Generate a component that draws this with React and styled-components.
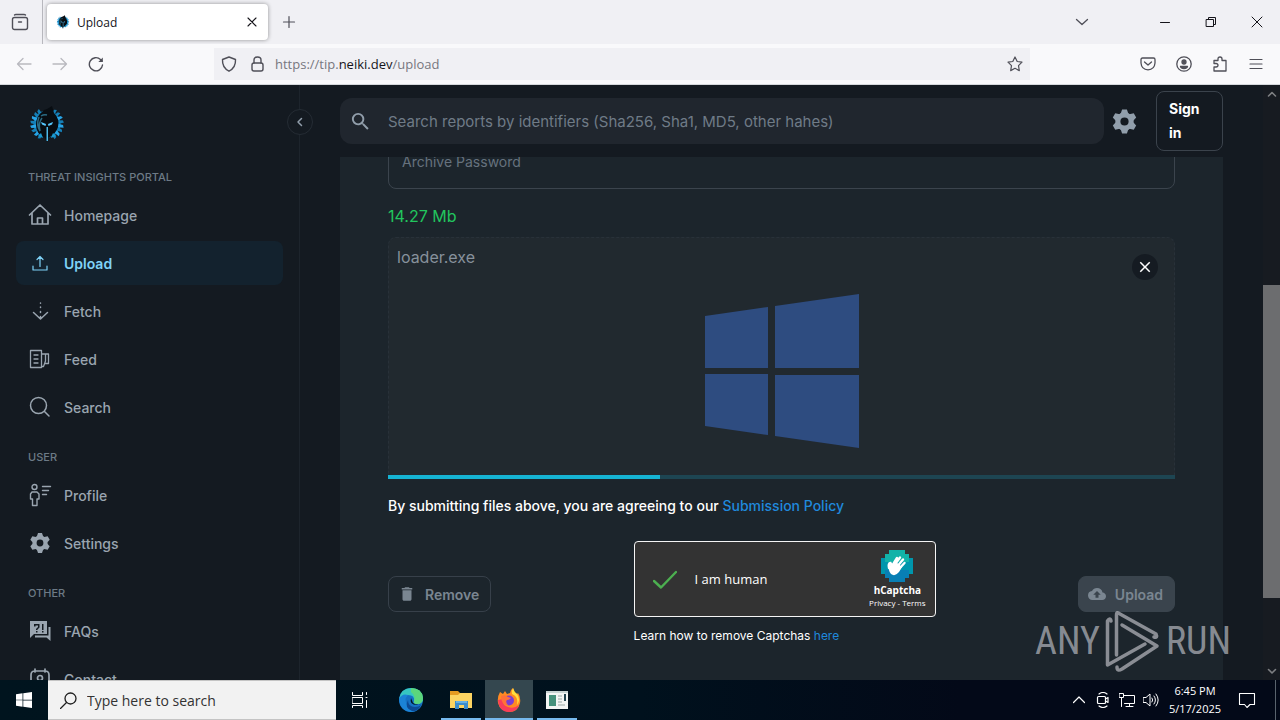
import React from "react";
import styled, { createGlobalStyle } from "styled-components";
import { MdSearch, MdDelete, MdCloudUpload, MdClose } from "react-icons/md";

const GlobalStyle = createGlobalStyle`
  * {
    box-sizing: border-box;
  }

  body {
    margin: 0;
    background: #141a21;
    font-family: Inter, "Liberation Sans", sans-serif;
    font-size: 14px;
  }

  button, input {
    font-family: inherit;
    margin: 0;
  }

  a {
    text-decoration: none;
  }

  svg {
    display: block;
    flex: none;
  }
`;

const systemFont = `"Open Sans", "Noto Sans", sans-serif`;

const Screen = styled.div`
  position: relative;
  height: 100vh;
  display: flex;
  flex-direction: column;
  overflow: hidden;
`;

/* browser */

const TabBar = styled.div`
  flex: none;
  height: 44px;
  display: flex;
  align-items: center;
  background: #f0f0f4;
  color: #3e3e46;
  font-family: ${systemFont};
`;

const ChromeButton = styled.button`
  width: ${props => props.$width || 36}px;
  height: 36px;
  padding: 0;
  border: 0;
  background: none;
  display: flex;
  align-items: center;
  justify-content: center;
  color: ${props => props.$muted ? "#b9b9bf" : "#4f4f58"};
`;

const TabDivider = styled.div`
  width: 1px;
  height: 44px;
  margin: 0 4px 0 2px;
  background: #b8b8be;
`;

const Tab = styled.div`
  width: 221px;
  height: 36px;
  padding: 0 8px 0 9px;
  display: flex;
  align-items: center;
  gap: 7px;
  border-radius: 4px;
  background: #ffffff;
  box-shadow: 0 0 4px rgba(0, 0, 0, 0.4);
  color: #15141a;
  font-size: 12px;
`;

const TabTitle = styled.span`
  flex: 1;
`;

const TabClose = styled.button`
  width: 16px;
  height: 24px;
  padding: 0;
  border: 0;
  background: none;
  display: flex;
  align-items: center;
  justify-content: center;
  color: #15141a;
`;

const Spacer = styled.div`
  flex: 1;
`;

const WindowButtons = styled.div`
  display: flex;
  margin-left: 42px;

  button {
    color: #15141a;
  }
`;

const NavBar = styled.div`
  flex: none;
  height: 41px;
  padding: 0 6px;
  display: flex;
  align-items: center;
  background: #f9f9fb;
  border-bottom: 1px solid #d5d8dc;
  font-family: ${systemFont};
`;

const UrlBox = styled.div`
  flex: 1;
  max-width: 816px;
  height: 32px;
  margin: 0 auto;
  display: flex;
  align-items: center;
  background: #f0f0f4;
  color: #4f4f58;
`;

const UrlText = styled.div`
  flex: 1;
  padding-left: 4px;
  font-size: 13px;
  color: #77777f;

  b {
    font-weight: 400;
    color: #15141a;
  }
`;

/* page */

const Page = styled.div`
  flex: 1;
  min-height: 0;
  display: flex;
  background: #141a21;
  color: #919eab;
`;

const Sidebar = styled.nav`
  position: relative;
  flex: none;
  width: 300px;
  padding: 0 16px;
  border-right: 1px solid #1d242c;
`;

const SidebarClip = styled.div`
  height: 100%;
  overflow: hidden;
`;

const LogoLink = styled.a`
  height: 68px;
  padding: 20px 0 0 12px;
  display: block;
`;

const Collapse = styled.button`
  position: absolute;
  top: 24px;
  right: -14px;
  width: 26px;
  height: 26px;
  padding: 0;
  border: 1px solid #252c34;
  border-radius: 50%;
  background: #141a21;
  color: #919eab;
  display: flex;
  align-items: center;
  justify-content: center;
`;

const NavHeading = styled.h2`
  margin: 0;
  padding: 16px 12px 8px;
  font-size: 11px;
  line-height: 16px;
  font-weight: 500;
  color: #6d7a86;
`;

const NavItem = styled.a`
  height: 44px;
  margin-bottom: 4px;
  padding: 0 12px;
  display: flex;
  align-items: center;
  gap: 12px;
  border-radius: 8px;
  background: ${props => props.$active ? "#13222e" : "none"};
  color: ${props => props.$active ? "#7fd2f7" : "#9aa5b0"};
  font-weight: ${props => props.$active ? 600 : 500};
  font-size: 14px;
`;

const Main = styled.main`
  flex: 1;
  min-width: 0;
  padding: 0 40px;
  display: flex;
  flex-direction: column;
`;

const Header = styled.header`
  flex: none;
  height: 72px;
  display: flex;
  align-items: center;
`;

const SearchBox = styled.label`
  flex: 1;
  height: 46px;
  padding: 0 9px;
  display: flex;
  align-items: center;
  gap: 16px;
  border-radius: 12px;
  background: #20262e;
  color: #919eab;
`;

const SearchInput = styled.input`
  flex: 1;
  min-width: 0;
  padding: 0;
  border: 0;
  outline: 0;
  background: none;
  color: #ffffff;
  font-size: 15px;

  &::placeholder {
    color: #6f7b87;
    opacity: 1;
  }
`;

const IconButton = styled.button`
  width: 40px;
  height: 40px;
  padding: 0;
  border: 0;
  background: none;
  color: #919eab;
  display: flex;
  align-items: center;
  justify-content: center;
`;

const SignIn = styled.button`
  width: 67px;
  margin-left: 12px;
  padding: 5px 12px;
  border: 1px solid #3b434c;
  border-radius: 8px;
  background: none;
  color: #ffffff;
  font-size: 14px;
  line-height: 24px;
  font-weight: 700;
  text-align: left;
`;

const Scroller = styled.div`
  flex: 1;
  min-height: 0;
  overflow: hidden;
`;

const Panel = styled.section`
  display: flow-root;
  min-height: 100%;
  padding: 0 48px;
  background: #1c252c;
`;

const PasswordInput = styled.input`
  display: block;
  width: 100%;
  height: 56px;
  margin-top: -24px;
  padding: 0 13px;
  border: 1px solid #3b444d;
  border-radius: 8px;
  outline: 0;
  background: none;
  color: #ffffff;
  font-size: 14px;

  &::placeholder {
    color: #66727e;
    opacity: 1;
  }
`;

const FileSize = styled.p`
  margin: 15px 0 9px;
  color: #22c55e;
  font-size: 16px;
  line-height: 24px;
`;

const FileCard = styled.div`
  position: relative;
  height: 238px;
  padding-top: 28px;
  display: flex;
  align-items: center;
  justify-content: center;
  border: 1px dashed #283139;
  border-bottom: 0;
  border-radius: 8px 8px 0 0;
  background: #21292f;
`;

const FileName = styled.span`
  position: absolute;
  top: 8px;
  left: 8px;
  font-size: 16px;
  line-height: 22px;
  color: #87919c;
`;

const FileRemove = styled.button`
  position: absolute;
  top: 16px;
  right: 16px;
  width: 26px;
  height: 26px;
  padding: 0;
  border: 0;
  border-radius: 50%;
  background: #151b22;
  color: #ffffff;
  display: flex;
  align-items: center;
  justify-content: center;
`;

const Progress = styled.div`
  height: 4px;
  background: #1d4552;
`;

const ProgressFill = styled.div`
  height: 100%;
  background: #15b3d3;
`;

const Policy = styled.p`
  margin: 16px 0 24px;
  color: #ffffff;
  font-size: 14px;
  line-height: 22px;
  font-weight: 500;

  a {
    color: #2089dc;
  }
`;

const Actions = styled.div`
  display: flex;
  align-items: center;
  justify-content: space-between;
`;

const ActionButton = styled.button`
  height: 36px;
  padding: 0 11px 0 9px;
  display: flex;
  align-items: center;
  gap: 9px;
  border: 1px solid ${props => props.$filled ? "#3a444d" : "#37404a"};
  border-radius: 8px;
  background: ${props => props.$filled ? "#3a444d" : "none"};
  color: #7a8691;
  font-size: 14px;
  font-weight: 600;
`;

const Captcha = styled.div`
  width: 302px;
  height: 76px;
  padding: 0 9px 0 18px;
  display: flex;
  align-items: center;
  border: 1px solid #f5f5f5;
  border-radius: 4px;
  background: #333333;
  color: #ffffff;
  font-family: ${systemFont};
`;

const CaptchaLabel = styled.span`
  flex: 1;
  padding-left: 18px;
  font-size: 13px;
`;

const CaptchaBrand = styled.div`
  display: flex;
  flex-direction: column;
  align-items: center;
  font-size: 10px;
  line-height: 14px;
  font-weight: 700;
`;

const CaptchaLinks = styled.span`
  font-size: 8px;
  line-height: 12px;
  font-weight: 400;

  a {
    color: inherit;
  }
`;

const CaptchaHelp = styled.p`
  margin: 8px 0 0;
  color: #ffffff;
  font-size: 12px;
  line-height: 22px;

  a {
    color: #2089dc;
  }
`;

const Scrollbar = styled.div`
  flex: none;
  width: 17px;
  padding: 4px 0;
  display: flex;
  flex-direction: column;
  align-items: center;
  background: #171b21;
  color: #7d7f82;
`;

const ScrollTrack = styled.div`
  flex: 1;
  width: 100%;
  margin: 4px 0;
`;

const ScrollThumb = styled.div`
  background: #6c6d6f;
`;

const Watermark = styled.div`
  position: absolute;
  right: 49px;
  bottom: 47px;
  display: flex;
  align-items: center;
  gap: 5px;
  color: rgba(190, 192, 198, 0.68);
  font-family: "Roboto Condensed", "Liberation Sans Narrow", Roboto, sans-serif;
  font-size: 38px;
  line-height: 64px;
`;

/* taskbar */

const Taskbar = styled.footer`
  flex: none;
  height: 40px;
  display: flex;
  background: linear-gradient(90deg, #00141e 0%, #00111d 50%, #030918 75%);
  color: #ffffff;
  font-family: ${systemFont};
`;

const TaskButton = styled.button`
  position: relative;
  width: ${props => props.$width || 48}px;
  height: 40px;
  padding: 0;
  border: 0;
  background: ${props => props.$active ? "#34474f" : "none"};
  color: #ffffff;
  display: flex;
  align-items: center;
  justify-content: center;

  &::after {
    content: "";
    position: absolute;
    left: ${props => props.$active ? 0 : 4}px;
    right: ${props => props.$active ? 0 : 4}px;
    bottom: 0;
    height: 2px;
    background: ${props => props.$running ? "#76b9ed" : "transparent"};
  }
`;

const TaskSearch = styled.label`
  width: 288px;
  padding: 0 12px;
  display: flex;
  align-items: center;
  gap: 10px;
  background: #f2f2f2;
  border: 1px solid #c4c4c4;
  border-width: 1px 0;
  color: #1f1f1f;
`;

const TaskInput = styled.input`
  flex: 1;
  min-width: 0;
  padding: 0;
  border: 0;
  outline: 0;
  background: none;
  font-size: 14px;

  &::placeholder {
    color: #333333;
    opacity: 1;
  }
`;

const Clock = styled.time`
  width: 64px;
  padding-top: 2px;
  font-size: 11px;
  line-height: 18px;
  text-align: center;
  white-space: nowrap;
`;

const ShowDesktop = styled.div`
  width: 5px;
  margin-left: 8px;
  border-left: 1px solid #59636d;
`;

function Line({ size = 16, box = 16, width = 1, children }) {
  return (
    <svg width={size} height={size} viewBox={`0 0 ${box} ${box}`} fill="none" stroke="currentColor"
      strokeWidth={width} strokeLinecap="round" strokeLinejoin="round" aria-hidden="true">
      {children}
    </svg>
  );
}

function Emblem({ size }) {
  const rays = [32, 48, 65, 82, 99, 116, 133, 150, 210, 227, 244, 261, 278, 295, 312, 328];
  return (
    <svg width={size} height={size} viewBox="0 0 38 38" aria-hidden="true">
      <circle cx="19" cy="19" r="12" fill="#0b1a26" stroke="#1474a8" strokeWidth="3" />
      {rays.map(angle => (
        <path key={angle} d="M17 8 L17.500 3 L20 2 L20.500 8Z" fill={angle % 2 ? "#27a5e8" : "#1580b8"}
          transform={`rotate(${angle} 19 19)`} />
      ))}
      <path d="M16 5 L19 4 L24 1 L26 8 Q32 14 30 22 Q28 29 20 33 L19 37 L17 33 Q8 29 8 20 Q8 11 14 7Z" fill="#080d12" />
      <path d="M11 12 Q8 20 12 26 Q10 18 14 13 M19 10 Q16 9 13 11" fill="none" stroke="#2b6b84" strokeWidth="1.5" />
      <path d="M13 17 L18 19 L17.500 21 L14 19.500Z M25 17 L20 19 L20.500 21 L24 19.500Z" fill="#55c8ff" />
      <path d="M18.500 22 H20 V36 H18.500Z" fill="#4db9e8" />
      <path d="M10 31 L13 28 L15 33Z M28 31 L25 28 L23 33Z" fill="#1b9ad0" />
    </svg>
  );
}

const WindowsLogo = ({ size, color }) => (
  <svg width={size} height={size} viewBox="0 0 154 154" fill={color} aria-hidden="true">
    <path d="M0 22 L63 13 V74 H0Z M70 12 L154 0 V74 H70Z M0 80 H63 V141 L0 132Z M70 81 H154 V154 L70 142Z" />
  </svg>
);

function Gear({ size }) {
  const teeth = [0, 60, 120, 180, 240, 300];
  return (
    <svg width={size} height={size} viewBox="0 0 24 24" aria-hidden="true">
      <circle cx="12" cy="12" r="5.500" fill="none" stroke="currentColor" strokeWidth="4.200" />
      {teeth.map(angle => (
        <path key={angle} d="M8.500 6.500 L10 2 H14 L15.500 6.500Z" fill="currentColor" transform={`rotate(${angle} 12 12)`} />
      ))}
    </svg>
  );
}

const icons = {
  home: <Line size={24} box={24} width={1.7}><path d="M1.500 12 L12 2 L22.500 12 M4 10 V21 H20 V10 M9.500 21 V15 H14.500 V21" /></Line>,
  upload: <Line size={24} box={24} width={1.2}><path d="M5 15 V19 H19 V15 M12 15.500 V5.500 M9 8.500 L12 5.500 L15 8.500" /></Line>,
  fetch: <Line size={24} box={24} width={1.5}><path d="M5.500 13.500 L12.500 20 L19.500 13.500 M12.500 17.500 V19.500 M12.500 12.500 V13.500 M12.500 8 V8.500 M12.500 4 V4.200" /></Line>,
  feed: <Line size={24} box={24} width={1.3}><path d="M2.500 3.500 H13.500 V20.500 H2.500Z M6 8 H10 M6 12 H10 M6 16 H10 M13.500 7 H17.500 V14 L15.500 19.500 H13.500 M17.500 7 H20.500 V16.500 H17" /></Line>,
  search: <Line size={24} box={24} width={1.5}><circle cx="10.500" cy="10.500" r="8" /><path d="M16.500 16.500 L21 21" /></Line>,
  profile: <Line size={24} box={24} width={1.4}><circle cx="6.500" cy="4" r="2.500" /><path d="M4 9 H9 L11 11 V16 H9 V22.500 H4.500 V16 H2.500 V11Z M14.500 3.500 H22.500 M14.500 7.500 H20.500 M14.500 11.500 H18.500" /></Line>,
  settings: <Gear size={24} />,
  faqs: (
    <svg width="24" height="24" viewBox="0 0 24 24" fill="currentColor" aria-hidden="true">
      <path fillRule="evenodd" d="M2 2 H19 V15 H6 L2 19Z M6 5 V7.500 H7.500 V6.500 H10 V8 L8 10 V11 H9.500 V10.500 L11.500 8.500 V5Z M8 12 V13.500 H9.500 V12Z M14 5 V11 H15.500 V5Z M14 12 V13.500 H15.500 V12Z" />
      <path d="M20.500 8 H22.500 V22 L18.500 18.500 H7 V16.500 H20.500Z" />
    </svg>
  ),
  contact: <Line size={24} box={24} width={1.7}><path d="M7 2 V5 M17 2 V5 M3 20 V8 Q3 4 7 4 H17 Q21 4 21 8 V20" /><circle cx="12" cy="11" r="2.500" /></Line>,
};

const navigation = [
  {
    title: "THREAT INSIGHTS PORTAL",
    items: [
      { label: "Homepage", icon: "home" },
      { label: "Upload", icon: "upload", active: true },
      { label: "Fetch", icon: "fetch" },
      { label: "Feed", icon: "feed" },
      { label: "Search", icon: "search" },
    ],
  },
  {
    title: "USER",
    items: [
      { label: "Profile", icon: "profile" },
      { label: "Settings", icon: "settings" },
    ],
  },
  {
    title: "OTHER",
    items: [
      { label: "FAQs", icon: "faqs" },
      { label: "Contact", icon: "contact" },
    ],
  },
];

function Browser() {
  return (
    <>
      <TabBar>
        <ChromeButton $width={40} aria-label="Firefox View">
          <Line size={18} box={18} width={1.4}><path d="M3.500 2 Q4 1.500 5 1.500 H13 Q14 1.500 14.500 2" /><rect x="1.500" y="4.500" width="15" height="12" rx="2" /><path d="M7.500 9 H10.500" /></Line>
        </ChromeButton>
        <TabDivider />
        <Tab>
          <Emblem size={14} />
          <TabTitle>Upload</TabTitle>
          <TabClose aria-label="Close tab"><Line size={10} box={10} width={1.1}><path d="M1 1 L9 9 M9 1 L1 9" /></Line></TabClose>
        </Tab>
        <ChromeButton $width={42} aria-label="New tab"><Line size={14} box={14} width={1.2}><path d="M7 1.500 V12.500 M1.500 7 H12.500" /></Line></ChromeButton>
        <Spacer />
        <ChromeButton aria-label="List all tabs"><Line size={14} box={14} width={1.3}><path d="M1.500 4.500 L7 9.500 L12.500 4.500" /></Line></ChromeButton>
        <WindowButtons>
          <ChromeButton $width={46} aria-label="Minimize"><Line size={12} box={12}><path d="M1.500 6.500 H10.500" /></Line></ChromeButton>
          <ChromeButton $width={46} aria-label="Restore"><Line size={12} box={12}><path d="M1.500 3.500 H8.500 V10.500 H1.500Z M3.500 3.500 V1.500 H10.500 V8.500 H8.500" /></Line></ChromeButton>
          <ChromeButton $width={46} aria-label="Close"><Line size={12} box={12}><path d="M1 1 L11 11 M11 1 L1 11" /></Line></ChromeButton>
        </WindowButtons>
      </TabBar>
      <NavBar>
        <ChromeButton $muted aria-label="Back"><Line width={1.3}><path d="M15 8 H1.500 M7 2.500 L1.500 8 L7 13.500" /></Line></ChromeButton>
        <ChromeButton $muted aria-label="Forward"><Line width={1.3}><path d="M1 8 H14.500 M9 2.500 L14.500 8 L9 13.500" /></Line></ChromeButton>
        <ChromeButton aria-label="Reload"><Line width={1.4}><path d="M14.500 9 A6.600 6.600 0 1 1 12.500 3.500 L14 5" /><path d="M14.800 1.500 V6 H10.300Z" fill="currentColor" stroke="none" /></Line></ChromeButton>
        <UrlBox>
          <ChromeButton $width={30} aria-label="Tracking protection"><Line width={1.4}><path d="M8 1 L14.500 3.500 Q15 11.500 8 15.200 Q1 11.500 1.500 3.500Z" /></Line></ChromeButton>
          <ChromeButton $width={27} aria-label="Site information"><Line width={1.4}><rect x="2" y="7" width="11" height="8" rx="2" /><path d="M4 7 V4 Q4 1 7.500 1 Q11 1 11 4 V7" /></Line></ChromeButton>
          <UrlText>https://tip.<b>neiki.dev</b>/upload</UrlText>
          <ChromeButton $width={30} aria-label="Bookmark"><Line width={1.2}><path d="M8 1 L10.200 5.500 L15 6.200 L11.500 9.700 L12.300 14.600 L8 12.300 L3.700 14.600 L4.500 9.700 L1 6.200 L5.800 5.500Z" /></Line></ChromeButton>
        </UrlBox>
        <ChromeButton aria-label="Pocket"><Line width={1.3}><path d="M2.500 2 H13.500 Q15 2 15 3.500 V7 Q14.500 13.500 8 13.800 Q1.500 13.500 1 7 V3.500 Q1 2 2.500 2Z M4.500 6 L8 9 L11.500 6" /></Line></ChromeButton>
        <ChromeButton aria-label="Account"><Line width={1.3}><circle cx="8" cy="8" r="7.200" /><circle cx="8" cy="6" r="2" fill="currentColor" /><path d="M4.500 10.500 H11.500 Q11 12.500 8 12.500 Q5 12.500 4.500 10.500Z" fill="currentColor" /></Line></ChromeButton>
        <ChromeButton aria-label="Extensions"><Line width={1.3}><path d="M2 15 V11 H4 Q6 11 6 9.200 Q6 7.500 4 7.500 H2 V4.500 H6 V3 Q6 1 8 1 Q10 1 10 3 V4.500 H14 V15Z" /></Line></ChromeButton>
        <ChromeButton aria-label="Menu"><Line width={1.2}><path d="M2 3.500 H14 M2 8 H14 M2 12.500 H14" /></Line></ChromeButton>
      </NavBar>
    </>
  );
}

function SideNav() {
  return (
    <Sidebar>
      <SidebarClip>
        <LogoLink href="#" aria-label="Home"><Emblem size={38} /></LogoLink>
        {navigation.map(group => (
          <div key={group.title}>
            <NavHeading>{group.title}</NavHeading>
            {group.items.map(item => (
              <NavItem key={item.label} href="#" $active={item.active}>
                {icons[item.icon]}
                {item.label}
              </NavItem>
            ))}
          </div>
        ))}
      </SidebarClip>
      <Collapse aria-label="Collapse menu"><Line size={10} box={10} width={1.5}><path d="M6.500 1.500 L3 5 L6.500 8.500" /></Line></Collapse>
    </Sidebar>
  );
}

function HandLogo() {
  return (
    <svg width="34" height="34" viewBox="0 0 34 34" aria-hidden="true">
      <path d="M9 1 H25 V5 H29 V9 H33 V25 H29 V29 H25 V33 H9 V29 H5 V25 H1 V9 H5 V5 H9Z" fill="#0096ac" />
      <path d="M9 1 H25 V5 H29 V13 H5 V5 H9Z" fill="#12b3a8" />
      <path d="M5 21 H29 V29 H25 V33 H9 V29 H5Z" fill="#087fb5" />
      <path d="M9 19 Q8 14 10.500 14 L12 17 L17 9 M13 18 L20 8.500 M16 19 L23 10.500 M18 21 L24.500 14" fill="none" stroke="#fff" strokeWidth="2.400" strokeLinecap="round" />
      <path d="M9 15 L12 17 L16 13 L22 18 L19 23 Q15 28 11 25 Q8 22 9 15Z" fill="#fff" />
    </svg>
  );
}

function UploadForm({ progress }) {
  return (
    <Panel>
      <PasswordInput type="password" placeholder="Archive Password" aria-label="Archive Password" />
      <FileSize>14.27 Mb</FileSize>
      <FileCard>
        <FileName>loader.exe</FileName>
        <WindowsLogo size={154} color="#2e4c80" />
        <FileRemove aria-label="Remove file"><MdClose size={18} /></FileRemove>
      </FileCard>
      <Progress><ProgressFill style={{ width: `${progress}%` }} /></Progress>
      <Policy>By submitting files above, you are agreeing to our <a href="#">Submission Policy</a></Policy>
      <Actions>
        <ActionButton><MdDelete size={18} />Remove</ActionButton>
        <div>
          <Captcha>
            <Line size={24} box={24} width={2.4}><path d="M1 14 L8 20.500 L23 5" stroke="#4caf50" /></Line>
            <CaptchaLabel>I am human</CaptchaLabel>
            <CaptchaBrand>
              <HandLogo />
              hCaptcha
              <CaptchaLinks><a href="#">Privacy</a> - <a href="#">Terms</a></CaptchaLinks>
            </CaptchaBrand>
          </Captcha>
          <CaptchaHelp>Learn how to remove Captchas <a href="#">here</a></CaptchaHelp>
        </div>
        <ActionButton $filled><MdCloudUpload size={18} />Upload</ActionButton>
      </Actions>
    </Panel>
  );
}

const EdgeIcon = () => (
  <svg width="24" height="24" viewBox="0 0 24 24" aria-hidden="true">
    <circle cx="12" cy="12" r="12" fill="#1672c4" />
    <path d="M0 11 Q2 0 12 0 Q23 0 24 10 Q24 16 18 16 Q14 16 15 13 Q16 7 9 7 Q3 7 0 11Z" fill="#36c6c1" />
    <path d="M12 0 Q23 0 24 10 Q24 16 18 16 Q14 16 15 13 Q17 8 12 4Z" fill="#5bd67c" />
    <path d="M0 11 Q3 5 9 7 Q4 12 9 18 Q14 22 21 19 Q17 24 12 24 Q1 23 0 11Z" fill="#1b83d6" />
    <path d="M9 12 Q9 19 16 19 Q20 19 22 17 Q19 24 13 23 Q5 20 9 12Z" fill="#0c4a94" />
    <path d="M12 10 Q10 17 18 17 L23 16 Q18 18 14 15Z" fill="#00141e" />
  </svg>
);

const FolderIcon = () => (
  <svg width="22" height="20" viewBox="0 0 22 20" aria-hidden="true">
    <path d="M0 1 H8 L10 3 H21 V7 H0Z" fill="#e59b22" />
    <path d="M0 5 H8 L10 3 H22 V18 H0Z" fill="#fcd462" />
    <path d="M5 11 H18 V19 H14 V15 H9 V19 H5Z" fill="#3c8dcc" />
    <path d="M6 11 H17 V13 H6Z" fill="#65b1e5" />
  </svg>
);

const FirefoxIcon = () => (
  <svg width="24" height="24" viewBox="0 0 24 24" aria-hidden="true">
    <path d="M3 4 L6 6 L8 3 L10 6 L13 5 Q13 2 16 0 Q17 4 20 6 L21 5 Q24 9 23 15 Q21 24 12 24 Q3 23 1 15 Q0 9 3 4Z" fill="#ff8a22" />
    <path d="M16 0 Q17 4 20 6 Q24 12 20 17 Q22 9 15 6 Q14 3 16 0Z" fill="#ffdd3d" />
    <path d="M1 12 Q2 24 12 24 Q20 24 22 17 Q17 21 11 19 Q5 17 6 11Z" fill="#f93d59" />
    <circle cx="12" cy="12.500" r="5" fill="#7b3dd1" />
    <path d="M4 8 Q8 6 11 9 L14 10 Q12 12 10 12 Q8 14 11 17 Q4 17 4 8Z" fill="#ff7139" />
  </svg>
);

const AppIcon = () => (
  <svg width="22" height="20" viewBox="0 0 22 20" aria-hidden="true">
    <path d="M0 1 H22 V19 H0Z" fill="#f3f5f4" />
    <path d="M0 1 H22 V3 H0Z" fill="#c8d3d3" />
    <path d="M3 5 H10 V16 H3Z" fill="#46917c" />
    <path d="M12 6 H16 M12 9 H16 M12 12 H16 M12 15 H19" stroke="#9aa7a5" />
    <path d="M19 4 V11" stroke="#234450" strokeWidth="2" />
  </svg>
);

function WindowsTaskbar() {
  return (
    <Taskbar>
      <TaskButton aria-label="Start"><WindowsLogo size={16} color="#ffffff" /></TaskButton>
      <TaskSearch>
        <Line size={17} box={17} width={1.3}><circle cx="10.500" cy="6.500" r="5.500" /><path d="M6.500 10.500 L0.500 16.500" /></Line>
        <TaskInput placeholder="Type here to search" aria-label="Search Windows" />
      </TaskSearch>
      <TaskButton aria-label="Task view"><Line><path d="M0.500 0.500 V3.500 H10.500 V0.500 M0.500 5.500 H10.500 V11.500 H0.500Z M0.500 15.500 V13.500 H10.500 V15.500 M14.500 0.500 V2.500 M14.500 8.500 V15.500 M14 5.500 H15" /></Line></TaskButton>
      <TaskButton $width={53} aria-label="Edge"><EdgeIcon /></TaskButton>
      <TaskButton $running aria-label="File Explorer"><FolderIcon /></TaskButton>
      <TaskButton $active $running aria-label="Firefox"><FirefoxIcon /></TaskButton>
      <TaskButton $running aria-label="Application"><AppIcon /></TaskButton>
      <Spacer />
      <TaskButton $width={24} aria-label="Hidden icons"><Line size={12} box={12} width={1.2}><path d="M0.500 8.500 L6 3 L11.500 8.500" /></Line></TaskButton>
      <TaskButton $width={24} aria-label="Meet now"><Line width={1.2}><rect x="2.500" y="4.500" width="8" height="7" rx="1" /><path d="M10.500 7 L13 5.500 V10.500 L10.500 9 M4 2 Q8 -1 12 2 M4 14 Q8 17 12 14" /></Line></TaskButton>
      <TaskButton $width={24} aria-label="Network"><Line><path d="M5 3.500 H15.500 V11.500 H5.500 M0.500 1.500 H4.500 V5.500 H0.500Z M2.500 5.500 V14.500 M10.500 11.500 V14.500 M7 14.500 H14" /></Line></TaskButton>
      <TaskButton $width={24} aria-label="Volume"><Line><path d="M0.500 5.500 H3 L7 2 V14 L3 10.500 H0.500Z M9 6 Q10.500 8 9 10 M11 4 Q14 8 11 12 M13 2 Q17.500 8 13 14" /></Line></TaskButton>
      <Clock>6:45 PM<br />5/17/2025</Clock>
      <TaskButton $width={40} aria-label="Notifications"><Line size={18} box={18} width={1.1}><path d="M1.500 2.500 H16.500 V13.500 H12 L9 16.500 L6.500 13.500 H1.500Z" /></Line></TaskButton>
      <ShowDesktop />
    </Taskbar>
  );
}

export default function App() {
  return (
    <Screen>
      <GlobalStyle />
      <Browser />
      <Page>
        <SideNav />
        <Main>
          <Header>
            <SearchBox>
              <MdSearch size={23} />
              <SearchInput placeholder="Search reports by identifiers (Sha256, Sha1, MD5, other hahes)" aria-label="Search reports" />
            </SearchBox>
            <IconButton aria-label="Settings"><Gear size={29} /></IconButton>
            <SignIn>Sign in</SignIn>
          </Header>
          <Scroller><UploadForm progress={34.5} /></Scroller>
        </Main>
        <Scrollbar>
          <Line size={10} box={10} width={1.6}><path d="M1.500 7 L5 3.500 L8.500 7" /></Line>
          <ScrollTrack>
            <ScrollThumb style={{ height: "56%", marginTop: 182 }} />
          </ScrollTrack>
          <Line size={10} box={10} width={1.6}><path d="M1.500 3.500 L5 7 L8.500 3.500" /></Line>
        </Scrollbar>
      </Page>
      <Watermark>
        ANY
        <svg width="56" height="64" viewBox="10 8 56 64" fill="none" stroke="currentColor" strokeWidth="3.500" strokeLinecap="round" strokeLinejoin="round" aria-hidden="true">
          <path d="M16 20 Q15 16 12.500 20 V64 L50 43 M21.500 54 V14 Q21.500 10 25 13 L61 33 Q63 37 59 36 M27 24 L62 45 L27 68 Q22 71 22 66" />
        </svg>
        RUN
      </Watermark>
      <WindowsTaskbar />
    </Screen>
  );
}
